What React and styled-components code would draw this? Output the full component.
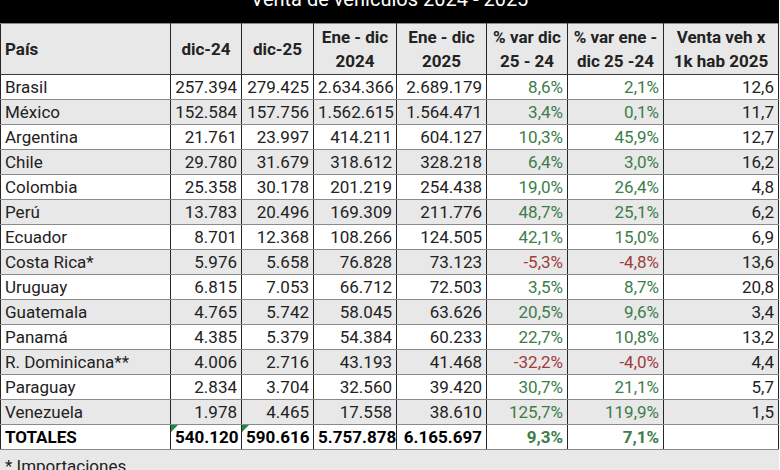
import React from 'react';
import styled, { createGlobalStyle } from 'styled-components';

const rows = [
  ['Brasil', '257.394', '279.425', '2.634.366', '2.689.179', '8,6%', '2,1%', '12,6'],
  ['México', '152.584', '157.756', '1.562.615', '1.564.471', '3,4%', '0,1%', '11,7'],
  ['Argentina', '21.761', '23.997', '414.211', '604.127', '10,3%', '45,9%', '12,7'],
  ['Chile', '29.780', '31.679', '318.612', '328.218', '6,4%', '3,0%', '16,2'],
  ['Colombia', '25.358', '30.178', '201.219', '254.438', '19,0%', '26,4%', '4,8'],
  ['Perú', '13.783', '20.496', '169.309', '211.776', '48,7%', '25,1%', '6,2'],
  ['Ecuador', '8.701', '12.368', '108.266', '124.505', '42,1%', '15,0%', '6,9'],
  ['Costa Rica*', '5.976', '5.658', '76.828', '73.123', '-5,3%', '-4,8%', '13,6'],
  ['Uruguay', '6.815', '7.053', '66.712', '72.503', '3,5%', '8,7%', '20,8'],
  ['Guatemala', '4.765', '5.742', '58.045', '63.626', '20,5%', '9,6%', '3,4'],
  ['Panamá', '4.385', '5.379', '54.384', '60.233', '22,7%', '10,8%', '13,2'],
  ['R. Dominicana**', '4.006', '2.716', '43.193', '41.468', '-32,2%', '-4,0%', '4,4'],
  ['Paraguay', '2.834', '3.704', '32.560', '39.420', '30,7%', '21,1%', '5,7'],
  ['Venezuela', '1.978', '4.465', '17.558', '38.610', '125,7%', '119,9%', '1,5'],
];

const widths = [170, 71, 72, 83, 90, 81, 96, 115];

const GlobalStyle = createGlobalStyle`
  body {
    margin: 0;
    background: #ffffff;
    font-family: Roboto, "Liberation Sans", sans-serif;
  }
`;

const Sheet = styled.div`
  width: 780px;
  height: 470px;
  overflow: hidden;
`;

const TitleBar = styled.div`
  width: 779px;
  height: 23px;
  background: #000;
  color: #fff;
  text-align: center;
  overflow: hidden;
`;

const TitleText = styled.div`
  font-size: 20px;
  line-height: 24px;
  margin-top: -13px;
`;

const Table = styled.table`
  border-collapse: collapse;
  table-layout: fixed;
  width: 779px;
  margin-left: 0;
  color: #222;
  font-size: 17px;
`;

const HeadCell = styled.th`
  height: 50px;
  padding: 0 4px;
  background: #e8e8e8;
  font-weight: 700;
  line-height: 24px;
  text-align: ${(p) => (p.$left ? 'left' : 'center')};
  border-top: 1px solid #8a8a8a;
  border-bottom: 1px solid #3a3a3a;
  border-left: 1px solid #262626;
  border-right: 1px solid #262626;
  white-space: nowrap;
`;

const Row = styled.tr`
  background: ${(p) => (p.$shade ? '#e8e8e8' : '#ffffff')};
`;

const Cell = styled.td`
  position: relative;
  height: 24px;
  padding: 0 4px;
  line-height: 24px;
  text-align: ${(p) => (p.$left ? 'left' : 'right')};
  font-weight: ${(p) => (p.$bold ? 700 : 400)};
  color: ${(p) => (p.$tone === 'up' ? '#3d7d48' : p.$tone === 'down' ? '#a03c3c' : p.$bold ? '#000' : '#222')};
  border-bottom: 1px solid #8a8a8a;
  border-left: 1px solid #262626;
  border-right: 1px solid #262626;
  white-space: nowrap;
  overflow: hidden;
`;

const Flag = styled.span`
  position: absolute;
  top: 0;
  left: 0;
  width: 0;
  height: 0;
  border-top: 7px solid #1e8a3c;
  border-right: 7px solid transparent;
`;

const Note = styled.div`
  width: 774px;
  height: 20px;
  padding: 6px 0 0 5px;
  background: #e8e8e8;
  color: #222;
  font-size: 17px;
  line-height: 20px;
`;

const tone = (v) => (v.startsWith('-') ? 'down' : 'up');

export default function App() {
  return (
    <Sheet>
      <GlobalStyle />
      <TitleBar>
        <TitleText>Venta de vehículos 2024 - 2025</TitleText>
      </TitleBar>
      <Table>
        <colgroup>
          {widths.map((w, i) => (
            <col key={i} style={{ width: w }} />
          ))}
        </colgroup>
        <thead>
          <tr>
            <HeadCell $left>País</HeadCell>
            <HeadCell>dic-24</HeadCell>
            <HeadCell>dic-25</HeadCell>
            <HeadCell>Ene - dic<br />2024</HeadCell>
            <HeadCell>Ene - dic<br />2025</HeadCell>
            <HeadCell>% var dic<br />25 - 24</HeadCell>
            <HeadCell>% var ene -<br />dic 25 -24</HeadCell>
            <HeadCell>Venta veh x<br />1k hab 2025</HeadCell>
          </tr>
        </thead>
        <tbody>
          {rows.map((r, i) => (
            <Row key={r[0]} $shade={i % 2 === 1}>
              <Cell $left>{r[0]}</Cell>
              <Cell>{r[1]}</Cell>
              <Cell>{r[2]}</Cell>
              <Cell>{r[3]}</Cell>
              <Cell>{r[4]}</Cell>
              <Cell $tone={tone(r[5])}>{r[5]}</Cell>
              <Cell $tone={tone(r[6])}>{r[6]}</Cell>
              <Cell>{r[7]}</Cell>
            </Row>
          ))}
          <Row>
            <Cell $left $bold>TOTALES</Cell>
            <Cell $bold><Flag />540.120</Cell>
            <Cell $bold><Flag />590.616</Cell>
            <Cell $bold>5.757.878</Cell>
            <Cell $bold>6.165.697</Cell>
            <Cell $bold $tone="up">9,3%</Cell>
            <Cell $bold $tone="up">7,1%</Cell>
            <Cell />
          </Row>
        </tbody>
      </Table>
      <Note>* Importaciones</Note>
    </Sheet>
  );
}
